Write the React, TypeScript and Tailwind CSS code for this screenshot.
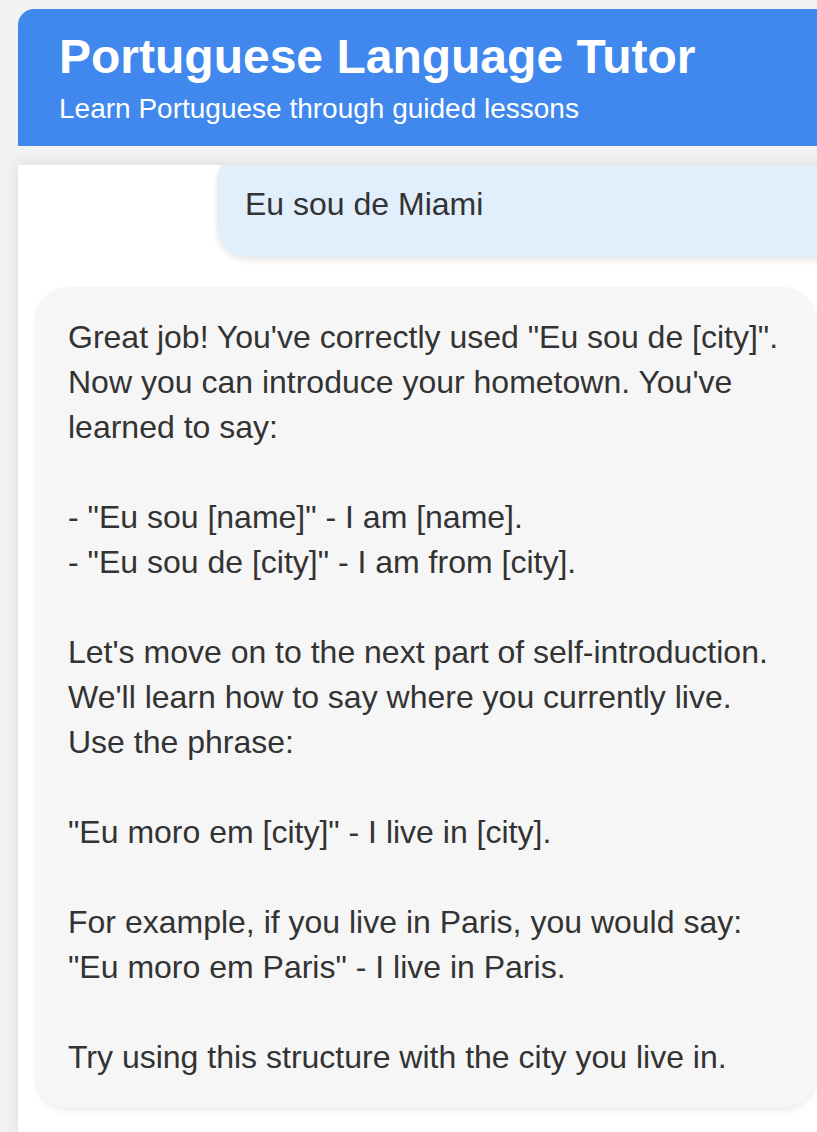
const reply = `Great job! You've correctly used "Eu sou de [city]".
Now you can introduce your hometown. You've
learned to say:

- "Eu sou [name]" - I am [name].
- "Eu sou de [city]" - I am from [city].

Let's move on to the next part of self-introduction.
We'll learn how to say where you currently live.
Use the phrase:

"Eu moro em [city]" - I live in [city].

For example, if you live in Paris, you would say:
"Eu moro em Paris" - I live in Paris.

Try using this structure with the city you live in.`;

export default function App() {
  return (
    <div className="h-screen w-screen overflow-hidden bg-[#f2f2f2] font-['Liberation_Sans',Arial,sans-serif] text-[#333]">
      <div className="ml-[18px] flex h-full w-[860px] flex-col pt-[9px]">
        {/* header */}
        <header className="rounded-tl-[16px] bg-[#4087ee] pb-[21px] pl-[41px] pt-[20px] text-white">
          <h1 className="text-[48px] font-bold leading-[56px]">Portuguese Language Tutor</h1>
          <p className="mt-[8px] text-[28px] leading-[32px]">Learn Portuguese through guided lessons</p>
        </header>

        {/* chat area, scrolled a little so the first bubble is cut at the top */}
        <div className="mt-[19px] flex-1 overflow-hidden bg-white shadow-[0_0_16px_rgba(0,0,0,0.1)]">
          <div className="-mt-[13px] flex flex-col gap-[30px] px-[18px] text-[32px] leading-[45px]">
            <div className="ml-[181px] rounded-[30px] bg-[#e1effd] px-[28px] py-[30px] shadow-[0_3px_6px_rgba(0,0,0,0.1)]">
              Eu sou de Miami
            </div>
            <div className="w-[779px] whitespace-pre rounded-[32px] bg-[#f6f6f6] px-[32px] py-[28px] shadow-[0_3px_6px_rgba(0,0,0,0.08)]">
              {reply}
            </div>
          </div>
        </div>
      </div>
    </div>
  );
}
